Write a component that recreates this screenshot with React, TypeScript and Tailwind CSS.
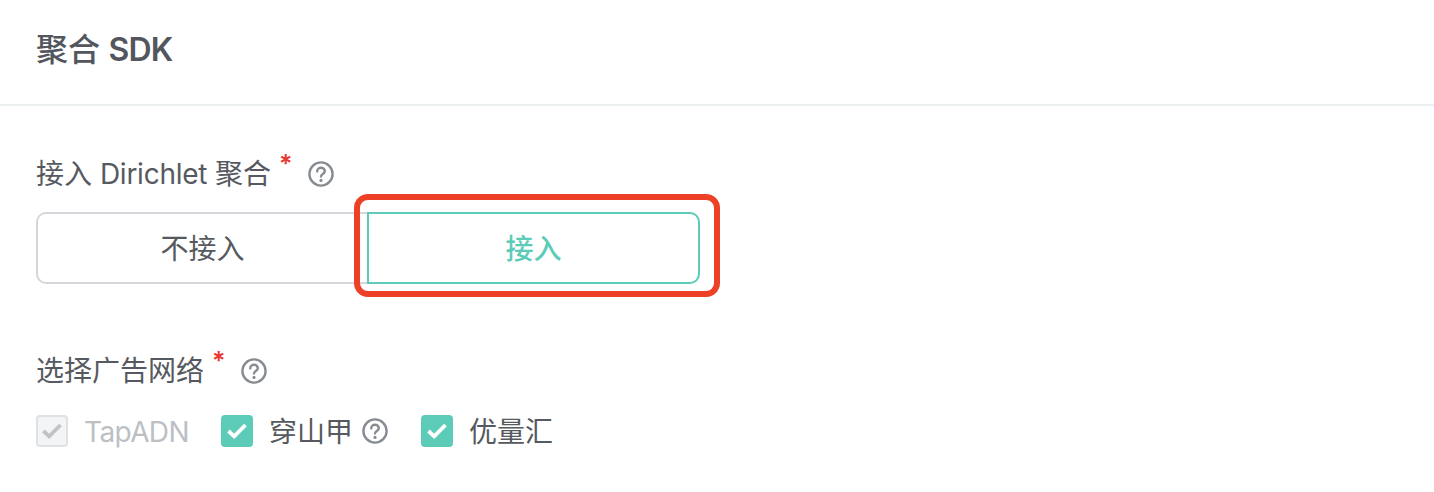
const fontStack = "font-['Inter','Noto_Sans_CJK_SC',sans-serif]";

function HelpIcon() {
  return (
    <svg width="26" height="26" viewBox="0 0 26 26" fill="none" className="shrink-0">
      <circle cx="13" cy="13" r="11.6" stroke="#878c92" strokeWidth="2.4" />
      <path
        d="M9.2 10.4c0-2.1 1.7-3.6 3.8-3.6s3.8 1.4 3.8 3.4c0 2.7-3.8 2.8-3.8 5.2"
        stroke="#878c92"
        strokeWidth="2.4"
        strokeLinecap="round"
      />
      <circle cx="13" cy="19.4" r="1.6" fill="#878c92" />
    </svg>
  );
}

function Check({ disabled }: { disabled?: boolean }) {
  return (
    <span
      className={
        disabled
          ? "w-8 h-8 rounded-[4px] border-2 border-[#dfe2e5] bg-[#f3f4f5] flex items-center justify-center shrink-0"
          : "w-8 h-8 rounded-[4px] bg-[#5ccbb7] flex items-center justify-center shrink-0"
      }
    >
      <svg width="22" height="18" viewBox="0 0 22 18" fill="none">
        <path
          d="M2.5 9 8.2 14.4 19.5 3"
          stroke={disabled ? "#bfc3c7" : "#ffffff"}
          strokeWidth="3.8"
        />
      </svg>
    </span>
  );
}

function Label({ children }: { children: React.ReactNode }) {
  return (
    <div className="flex items-center h-10">
      <span className="text-[28px] leading-10 text-[#565a60]">{children}</span>
      <span className="text-[25px] font-semibold leading-none text-[#e8392f] ml-2 -mt-5">*</span>
      <span className="ml-[15px] flex">
        <HelpIcon />
      </span>
    </div>
  );
}

export default function App() {
  return (
    <div className={`${fontStack} relative w-[1434px] h-[492px] bg-white overflow-hidden`}>
      {/* Header */}
      <div className="h-[106px] px-9 flex items-center border-b-2 border-[#eceff0]">
        <h1 className="text-[32px] font-medium text-[#53575d] -mt-[4px]">
          聚合 <span className="font-semibold tracking-[-0.8px]">SDK</span>
        </h1>
      </div>

      <div className="px-9 pt-[48px]">
        {/* Dirichlet */}
        <Label>
          接入 <span className="tracking-[-0.25px]">Dirichlet</span> 聚合
        </Label>
        <div className="flex w-[664px] h-[72px] mt-[18px]">
          <button className="flex-1 pt-[2px] rounded-l-[10px] border-2 border-r-0 border-[#d3d7db] text-[28px] text-[#565a60]">
            不接入
          </button>
          <button className="flex-1 pt-[2px] rounded-r-[10px] border-2 border-[#5ccbb7] text-[28px] font-medium text-[#5ccbb7]">
            接入
          </button>
        </div>

        {/* Ad networks */}
        <div className="mt-[67px]">
          <Label>选择广告网络</Label>
        </div>
        <div className="flex items-center mt-[18px]">
          <Check disabled />
          <span className="ml-4 pt-[2px] text-[28px] text-[#bcc0c4] tracking-[-0.6px]">TapADN</span>
          <span className="ml-[32px]">
            <Check />
          </span>
          <span className="ml-4 pt-[2px] text-[28px] text-[#565a60]">穿山甲</span>
          <span className="ml-[9px] flex">
            <HelpIcon />
          </span>
          <span className="ml-[33px]">
            <Check />
          </span>
          <span className="ml-4 pt-[2px] text-[28px] text-[#565a60]">优量汇</span>
        </div>
      </div>

      {/* Red annotation */}
      <div className="absolute left-[354px] top-[194px] w-[366px] h-[103px] rounded-[14px] border-[6px] border-[#ec4126]" />
    </div>
  );
}
